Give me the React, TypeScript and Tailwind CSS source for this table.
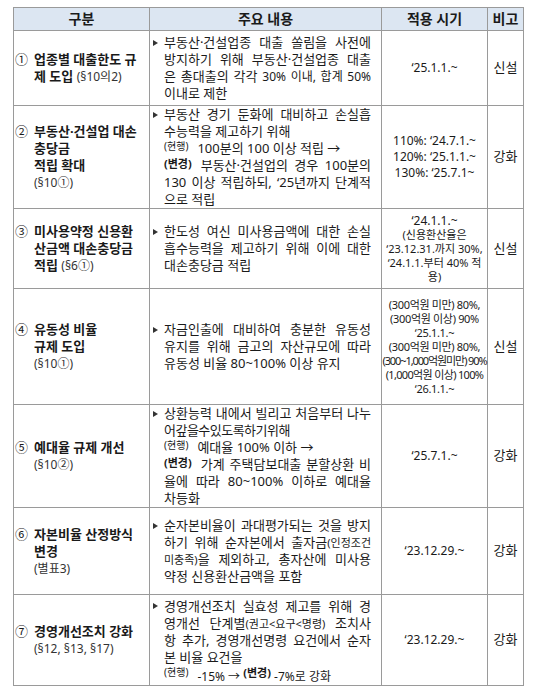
import type { ReactNode } from 'react';

const FONT = "font-['Noto_Sans','Noto_Sans_CJK_KR',sans-serif]";

// justified line (forced), plain line
function J({ children, className = '' }: { children: ReactNode; className?: string }) {
  return <div className={'whitespace-nowrap text-justify [text-align-last:justify] ' + className}>{children}</div>;
}
function L({ children, className = '' }: { children: ReactNode; className?: string }) {
  return <div className={'whitespace-nowrap ' + className}>{children}</div>;
}

const Cur = () => <span className="relative -top-[3px] mr-[9px] text-[10px] leading-none">(현행)</span>;
const Chg = () => <span className="relative -top-[2px] mr-[9px] text-[11px] font-bold leading-none">(변경)</span>;
const Sm = ({ children }: { children: ReactNode }) => <span className="text-[11px] leading-none">{children}</span>;

function Bullet() {
  return (
    <span className="flex h-[17px] w-[11px] shrink-0 items-center">
      <svg width="5" height="6" viewBox="0 0 5 6">
        <path d="M0 0 L5 3 L0 6 Z" fill="#333" />
      </svg>
    </span>
  );
}

function Body({ children }: { children: ReactNode }) {
  return (
    <div className="flex pl-[3px] pr-[10px]">
      <Bullet />
      <div className="min-w-0 flex-1 text-[13px] leading-[17px]">{children}</div>
    </div>
  );
}

function Title({ no, children }: { no: string; children: ReactNode }) {
  return (
    <div className="flex pl-px pr-1">
      <span className="w-[19px] shrink-0 text-[13px] leading-[17px]">{no}</span>
      <div className="min-w-0 flex-1 text-[13px] font-bold leading-[17px]">{children}</div>
    </div>
  );
}

const Ref = ({ children }: { children: ReactNode }) => (
  <span className="text-[12px] font-normal leading-none text-[#333]">{children}</span>
);

type Row = { h: string; title: ReactNode; body: ReactNode; date: ReactNode; note: string };

const rows: Row[] = [
  {
    h: 'h-[75px]',
    title: (
      <Title no="①">
        <div>업종별 대출한도 규</div>
        <div>
          제 도입 <Ref>(§10의2)</Ref>
        </div>
      </Title>
    ),
    body: (
      <Body>
        <J>부동산·건설업종 대출 쏠림을 사전에</J>
        <J>방지하기 위해 부동산·건설업종 대출</J>
        <J>
          은 총대출의 각각 <span className="text-[12px] leading-none">30% 이내, 합계 50%</span>
        </J>
        <L>이내로 제한</L>
      </Body>
    ),
    date: <div className="text-[12px]">‘25.1.1.~</div>,
    note: '신설',
  },
  {
    h: 'h-[102px]',
    title: (
      <Title no="②">
        <div>부동산·건설업 대손</div>
        <div>충당금</div>
        <div>적립 확대</div>
        <Ref>(§10①)</Ref>
      </Title>
    ),
    body: (
      <Body>
        <J>부동산 경기 둔화에 대비하고 손실흡</J>
        <L>수능력을 제고하기 위해</L>
        <L>
          <Cur />
          100분의 100 이상 적립 →
        </L>
        <J>
          <Chg />
          부동산·건설업의 경우 100분의
        </J>
        <J>130 이상 적립하되, ‘25년까지 단계적</J>
        <L>으로 적립</L>
      </Body>
    ),
    date: (
      <div className="text-[12px] leading-[16px]">
        <div>110%: ‘24.7.1.~</div>
        <div>120%: ‘25.1.1.~</div>
        <div>130%: ‘25.7.1~</div>
      </div>
    ),
    note: '강화',
  },
  {
    h: 'h-[80px]',
    title: (
      <Title no="③">
        <div>미사용약정 신용환</div>
        <div>산금액 대손충당금</div>
        <div>
          적립 <Ref>(§6①)</Ref>
        </div>
      </Title>
    ),
    body: (
      <Body>
        <J>한도성 여신 미사용금액에 대한 손실</J>
        <J>흡수능력을 제고하기 위해 이에 대한</J>
        <L>대손충당금 적립</L>
      </Body>
    ),
    date: (
      <div className="text-[11px] leading-[14px]">
        <div className="text-[12px] leading-[15px]">‘24.1.1.~</div>
        <div>(신용환산율은</div>
        <div>‘23.12.31.까지 30%,</div>
        <div>‘24.1.1.부터 40% 적</div>
        <div>용)</div>
      </div>
    ),
    note: '신설',
  },
  {
    h: 'h-[116px]',
    title: (
      <Title no="④">
        <div>유동성 비율</div>
        <div>규제 도입</div>
        <Ref>(§10①)</Ref>
      </Title>
    ),
    body: (
      <Body>
        <J>자금인출에 대비하여 충분한 유동성</J>
        <J>유지를 위해 금고의 자산규모에 따라</J>
        <L>유동성 비율 80~100% 이상 유지</L>
      </Body>
    ),
    date: (
      <div className="text-[11px] leading-[14px] tracking-[-0.03em]">
        <div>(300억원 미만) 80%,</div>
        <div>(300억원 이상) 90%</div>
        <div>‘25.1.1.~</div>
        <div>(300억원 미만) 80%,</div>
        <div className="tracking-[-0.1em]">(300~1,000억원미만) 90%</div>
        <div className="tracking-[-0.06em]">(1,000억원 이상) 100%</div>
        <div>‘26.1.1.~</div>
      </div>
    ),
    note: '신설',
  },
  {
    h: 'h-[102px]',
    title: (
      <Title no="⑤">
        <div>예대율 규제 개선</div>
        <Ref>(§10②)</Ref>
      </Title>
    ),
    body: (
      <Body>
        <J>상환능력 내에서 빌리고 처음부터 나누</J>
        <L className="tracking-[-0.04em]">어갚을수있도록하기위해</L>
        <L>
          <Cur />
          예대율 100% 이하 →
        </L>
        <J>
          <Chg />
          가계 주택담보대출 분할상환 비
        </J>
        <J>율에 따라 80~100% 이하로 예대율</J>
        <L>차등화</L>
      </Body>
    ),
    date: <div className="text-[12px]">‘25.7.1.~</div>,
    note: '강화',
  },
  {
    h: 'h-[87px]',
    title: (
      <Title no="⑥">
        <div>자본비율 산정방식</div>
        <div>변경</div>
        <Ref>(별표3)</Ref>
      </Title>
    ),
    body: (
      <Body>
        <J>순자본비율이 과대평가되는 것을 방지</J>
        <J>
          하기 위해 순자본에서 출자금<Sm>(인정조건</Sm>
        </J>
        <J>
          <Sm>미충족)</Sm>을 제외하고, 총자산에 미사용
        </J>
        <L>약정 신용환산금액을 포함</L>
      </Body>
    ),
    date: <div className="text-[12px]">‘23.12.29.~</div>,
    note: '강화',
  },
  {
    h: 'h-[91px]',
    title: (
      <Title no="⑦">
        <div>경영개선조치 강화</div>
        <Ref>(§12, §13, §17)</Ref>
      </Title>
    ),
    body: (
      <Body>
        <J>경영개선조치 실효성 제고를 위해 경</J>
        <J>
          영개선 단계별<Sm>(권고&lt;요구&lt;명령)</Sm> 조치사
        </J>
        <J>항 추가, 경영개선명령 요건에서 순자</J>
        <L>본 비율 요건을</L>
        <L>
          <Cur />
          <span className="relative top-[2px] text-[12px] leading-none">-15% → </span>
          <span className="relative -top-[2px] text-[11px] font-bold leading-none">(변경)</span>
          <span className="relative top-[2px] text-[12px] leading-none"> -7%로 강화</span>
        </L>
      </Body>
    ),
    date: <div className="text-[12px]">‘23.12.29.~</div>,
    note: '강화',
  },
];

export default function App() {
  return (
    <div className={'min-h-[687px] bg-white pl-[13px] pt-[7px] text-[#1a1a1a] ' + FONT}>
      <table className="w-[510px] table-fixed border-collapse">
        <colgroup>
          <col className="w-[136px]" />
          <col className="w-[232px]" />
          <col className="w-[106px]" />
          <col className="w-[36px]" />
        </colgroup>
        <thead>
          <tr className="h-[23px] bg-[#dce6f2] text-[14px] font-bold leading-[20px]">
            <th className="border border-[#9a9a9a] p-0 text-center">구분</th>
            <th className="border border-[#9a9a9a] p-0 text-center">주요 내용</th>
            <th className="border border-[#9a9a9a] p-0 text-center">적용 시기</th>
            <th className="border border-[#9a9a9a] p-0 text-center">비고</th>
          </tr>
        </thead>
        <tbody>
          {rows.map((r, i) => (
            <tr key={i} className={r.h}>
              <td className="border border-[#9a9a9a] p-0 align-middle">{r.title}</td>
              <td className="border border-[#9a9a9a] p-0 align-middle">{r.body}</td>
              <td className="border border-[#9a9a9a] p-0 text-center align-middle">{r.date}</td>
              <td className="border border-[#9a9a9a] p-0 text-center align-middle text-[13px]">{r.note}</td>
            </tr>
          ))}
        </tbody>
      </table>
    </div>
  );
}
